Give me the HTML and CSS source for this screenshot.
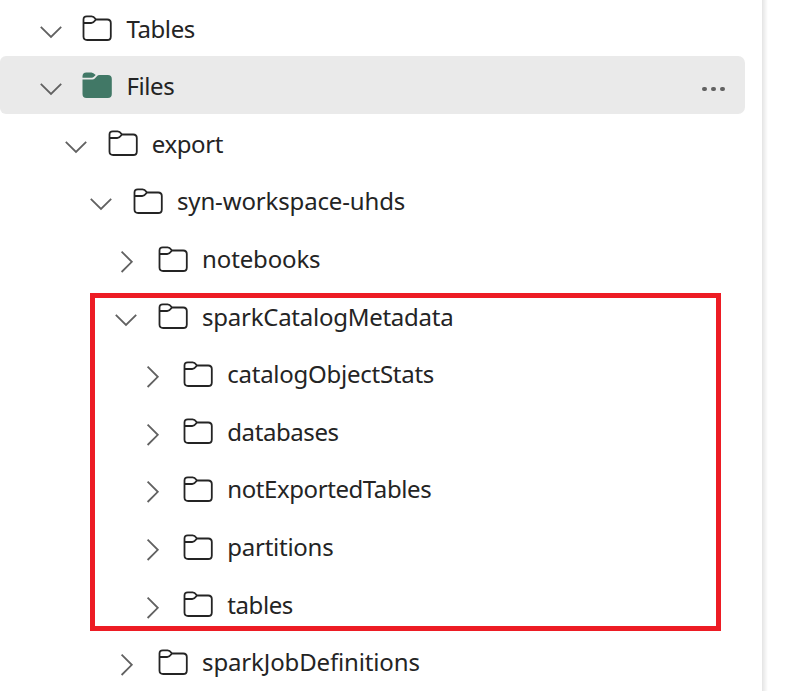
FILE: index.html
```html
<!DOCTYPE html>
<html lang="en">
<head>
<meta charset="utf-8">
<title>Explorer</title>
<link rel="stylesheet" href="styles.css">
</head>
<body>
<svg class="defs" width="0" height="0" aria-hidden="true">
  <symbol id="down" viewBox="0 0 24 24"><path d="M1.8 6.8 12 17 22.2 6.8"/></symbol>
  <symbol id="right" viewBox="0 0 24 24"><path d="M7.6 1.6 17.8 11.8 7.6 22"/></symbol>
  <symbol id="folder" viewBox="0 0 30 28"><path d="M1.5 5.6Q1.5 2.3 4.8 2.3H9.6C11.8 2.3 12.6 3.7 13.9 5.5H25.2Q28.8 5.5 28.8 9.1V22.4Q28.8 26 25.2 26H5.1Q1.5 26 1.5 22.4ZM1.5 9H9.2C11.8 9 12.6 7.2 13.9 5.5"/></symbol>
  <symbol id="folder-fill" viewBox="0 0 30 28"><path d="M.5 6.7V5.2Q.5 1.4 4.4 1.4H9.4Q11.3 1.4 13.7 3.9L11.9 5.8Q10.9 6.7 9.6 6.7ZM.5 8.6H10.4Q11.8 8.6 12.8 7.5L14.9 5.3Q15.8 4 17.6 4H25.8Q29.8 4 29.8 8V22.9Q29.8 26.9 25.8 26.9H4.5Q.5 26.9 .5 22.9Z"/></symbol>
</svg>
<main class="panel">
  <div class="tree">
    <div class="row l0"><svg class="chevron"><use href="#down"/></svg><svg class="folder"><use href="#folder"/></svg><span class="label tight">Tables</span></div>
    <div class="row l0 selected"><svg class="chevron"><use href="#down"/></svg><svg class="folder filled"><use href="#folder-fill"/></svg><span class="label tight">Files</span><span class="more"><i></i><i></i><i></i></span></div>
    <div class="row l1"><svg class="chevron"><use href="#down"/></svg><svg class="folder"><use href="#folder"/></svg><span class="label tight">export</span></div>
    <div class="row l2"><svg class="chevron"><use href="#down"/></svg><svg class="folder"><use href="#folder"/></svg><span class="label">syn-workspace-uhds</span></div>
    <div class="row l3"><svg class="chevron"><use href="#right"/></svg><svg class="folder"><use href="#folder"/></svg><span class="label">notebooks</span></div>
    <div class="group">
      <div class="row l3"><svg class="chevron"><use href="#down"/></svg><svg class="folder"><use href="#folder"/></svg><span class="label snug">sparkCatalogMetadata</span></div>
      <div class="row l4"><svg class="chevron"><use href="#right"/></svg><svg class="folder"><use href="#folder"/></svg><span class="label snug">catalogObjectStats</span></div>
      <div class="row l4"><svg class="chevron"><use href="#right"/></svg><svg class="folder"><use href="#folder"/></svg><span class="label tight">databases</span></div>
      <div class="row l4"><svg class="chevron"><use href="#right"/></svg><svg class="folder"><use href="#folder"/></svg><span class="label tight">notExportedTables</span></div>
      <div class="row l4"><svg class="chevron"><use href="#right"/></svg><svg class="folder"><use href="#folder"/></svg><span class="label snug">partitions</span></div>
      <div class="row l4"><svg class="chevron"><use href="#right"/></svg><svg class="folder"><use href="#folder"/></svg><span class="label tight">tables</span></div>
      <div class="highlight"></div>
    </div>
    <div class="row l3"><svg class="chevron"><use href="#right"/></svg><svg class="folder"><use href="#folder"/></svg><span class="label">sparkJobDefinitions</span></div>
  </div>
</main>
</body>
</html>
```
FILE: styles.css
```css
* { box-sizing: border-box; }
body {
  margin: 0;
  height: 691px;
  overflow: hidden;
  background: #fff;
  color: #242424;
  font: 24px/34px "Noto Sans", "Open Sans", sans-serif;
}
.defs { position: absolute; }
.panel {
  width: 768px;
  height: 691px;
  background: linear-gradient(to right, #e4e4e4, #fff) right / 6px 100% no-repeat;
}
.tree { width: 745px; height: 691px; overflow: hidden; }
.row {
  display: flex;
  align-items: center;
  height: 57.6px;
  padding-left: 38.8px;
}
.tree > .row:first-child { margin-top: -1.6px; }
.l1 { padding-left: 64.1px; }
.l2 { padding-left: 89.3px; }
.l3 { padding-left: 114.4px; }
.l4 { padding-left: 139.6px; }
.selected { background: #eaeaea; border-radius: 6px 7px 7px 6px; }
.chevron {
  flex: none;
  width: 24px;
  height: 24px;
  margin-top: 9px;
  fill: none;
  stroke: #616161;
  stroke-width: 1.8;
}
.folder {
  flex: none;
  width: 30px;
  height: 28px;
  margin: 2px 14.2px 0 19.5px;
  fill: none;
  stroke: #242424;
  stroke-width: 1.8;
}
.filled { fill: #417866; stroke: none; margin-top: 1px; }
.label { letter-spacing: -.15px; white-space: nowrap; margin-top: 3px; }
.snug { letter-spacing: -.26px; }
.tight { letter-spacing: -.42px; }
.more { display: flex; gap: 4.6px; margin: 8px 20.5px 0 auto; }
.more i { width: 4.4px; height: 4.4px; border-radius: 50%; background: #616161; }
.group { position: relative; }
.highlight {
  position: absolute;
  left: 90px;
  top: 6.6px;
  width: 631px;
  height: 338px;
  border: 5px solid #ed1c24;
}
```
